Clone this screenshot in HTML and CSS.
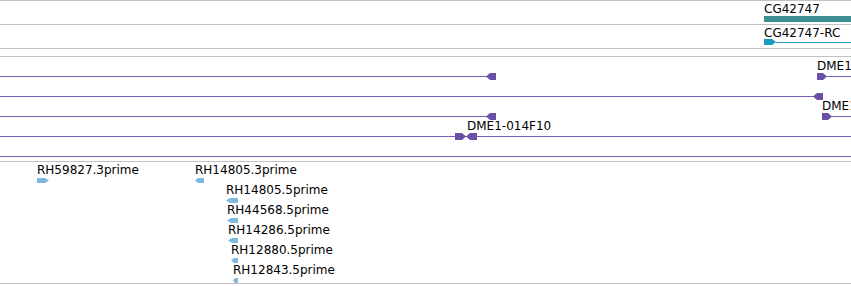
FILE: index.html
```html
<!doctype html>
<html>
<head>
<meta charset="utf-8">
<title>Track view</title>
<link rel="stylesheet" href="styles.css">
</head>
<body>
<div class="tracks">
	<!-- gene -->
	<div class="track track_first gene">
		<div class="label" style="left:764px;top:1px">CG42747</div>
		<div class="bar" style="left:764px;top:15px;width:87px"></div>
	</div>
	<!-- transcript -->
	<div class="track mrna">
		<div class="label" style="left:764px;top:1px">CG42747-RC</div>
		<svg class="glyph" style="left:764px;top:14px" width="12" height="6"><polygon points="0,0 8,0 12,3 8,6 0,6" fill="#1b9ac2"/></svg>
		<div class="thin" style="left:776px;top:17px;width:75px"></div>
	</div>
	<div class="track empty"></div>
	<!-- clones -->
	<div class="track clones">
		<div class="line" style="left:0;top:19px;width:490px"></div>
		<svg class="glyph" style="left:486px;top:16px" width="10" height="7"><polygon points="0,3.5 4,0 10,0 10,7 4,7" fill="#6b4ea6"/></svg>
		<div class="label" style="left:817px;top:2px">DME1</div>
		<svg class="glyph" style="left:817px;top:16px" width="10" height="7"><polygon points="0,0 6,0 10,3.5 6,7 0,7" fill="#6b4ea6"/></svg>
		<div class="line" style="left:825px;top:19px;width:26px"></div>

		<div class="line" style="left:0;top:39px;width:816px"></div>
		<svg class="glyph" style="left:813px;top:36px" width="10" height="7"><polygon points="0,3.5 4,0 10,0 10,7 4,7" fill="#6b4ea6"/></svg>

		<div class="line" style="left:0;top:59px;width:490px"></div>
		<svg class="glyph" style="left:486px;top:56px" width="10" height="7"><polygon points="0,3.5 4,0 10,0 10,7 4,7" fill="#6b4ea6"/></svg>
		<div class="label" style="left:822px;top:42px">DME1</div>
		<svg class="glyph" style="left:822px;top:56px" width="10" height="7"><polygon points="0,0 6,0 10,3.5 6,7 0,7" fill="#6b4ea6"/></svg>
		<div class="line" style="left:830px;top:59px;width:21px"></div>

		<div class="line" style="left:0;top:79px;width:851px"></div>
		<div class="label" style="left:467px;top:62px">DME1-014F10</div>
		<svg class="glyph" style="left:455px;top:76px" width="11" height="7"><polygon points="0,0 7,0 11,3.5 7,7 0,7" fill="#6b4ea6"/></svg>
		<svg class="glyph" style="left:466px;top:76px" width="11" height="7"><polygon points="0,3.5 4,0 11,0 11,7 4,7" fill="#6b4ea6"/></svg>

		<div class="line" style="left:0;top:99px;width:851px"></div>
	</div>
	<!-- ESTs -->
	<div class="track ests">
		<div class="label" style="left:37px;top:1px">RH59827.3prime</div>
		<svg class="glyph" style="left:37px;top:16px" width="12" height="5"><polygon points="0,0 8,0 12,2.5 8,5 0,5" fill="#7db9df"/></svg>

		<div class="label" style="left:195px;top:1px">RH14805.3prime</div>
		<svg class="glyph" style="left:195px;top:16px" width="9" height="5"><polygon points="0,2.5 3,0 9,0 9,5 3,5" fill="#7db9df"/></svg>

		<div class="label" style="left:226px;top:21px">RH14805.5prime</div>
		<svg class="glyph" style="left:226px;top:36px" width="12" height="5"><polygon points="0,2.5 4,0 12,0 12,5 4,5" fill="#7db9df"/></svg>

		<div class="label" style="left:227px;top:41px">RH44568.5prime</div>
		<svg class="glyph" style="left:227px;top:56px" width="11" height="5"><polygon points="0,2.5 4,0 11,0 11,5 4,5" fill="#7db9df"/></svg>

		<div class="label" style="left:228px;top:61px">RH14286.5prime</div>
		<svg class="glyph" style="left:228px;top:76px" width="10" height="5"><polygon points="0,2.5 4,0 10,0 10,5 4,5" fill="#7db9df"/></svg>

		<div class="label" style="left:231px;top:81px">RH12880.5prime</div>
		<svg class="glyph" style="left:231px;top:96px" width="7" height="5"><polygon points="0,2.5 3,0 7,0 7,5 3,5" fill="#7db9df"/></svg>

		<div class="label" style="left:233px;top:101px">RH12843.5prime</div>
		<svg class="glyph" style="left:233px;top:116px" width="5" height="5"><polygon points="0,2.5 2,0 5,0 5,5 2,5" fill="#7db9df"/></svg>
	</div>
</div>
</body>
</html>
```

FILE: styles.css
```css
*{
	margin:0;
	padding:0;
	border:0;
}
body{
	background:#fff;
	font-family:"DejaVu Sans",Verdana,sans-serif;
	font-size:12px;
	color:#000;
}
.tracks{
	width:851px;
	height:286px;
	overflow:hidden;
}
.track{
	position:relative;
	border-bottom:1px solid #c2c2c2;
	overflow:hidden;
}
.track_first{
	border-top:1px solid #c2c2c2;
}
.gene{
	height:23px;
}
.mrna{
	height:23px;
}
.empty{
	height:7px;
}
.clones{
	height:104px;
}
.ests{
	height:121px;
}
.track .label{
	position:absolute;
	line-height:14px;
	white-space:nowrap;
}
.track .glyph{
	position:absolute;
	display:block;
}
.track .bar{
	position:absolute;
	height:6px;
	background:#3b8f90;
}
.track .thin{
	position:absolute;
	height:1px;
	background:#2a9dc4;
}
.track .line{
	position:absolute;
	height:1px;
	background:#7a5db6;
}
```
